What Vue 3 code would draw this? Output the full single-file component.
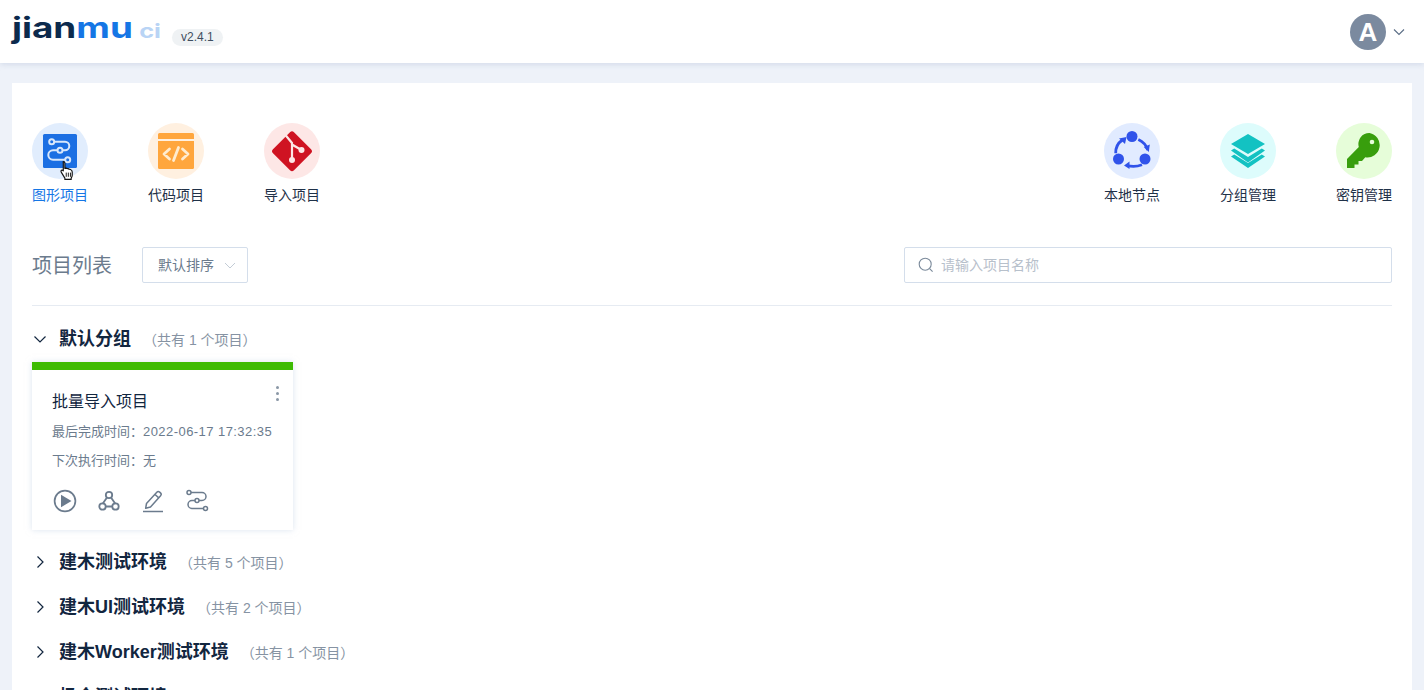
<template>
  <div class="page">
    <header class="top">
      <div class="brand">
        <span class="logo"><span class="logo__dark">jian</span><span class="logo__blue">mu</span><span class="logo__ci">ci</span></span>
        <span class="version">v2.4.1</span>
      </div>
      <div class="user">
        <span class="avatar">A</span>
        <svg class="user__arrow" width="12" height="8" viewBox="0 0 12 8"><path d="M1 1.5l5 5 5-5" fill="none" stroke="#5a6d85" stroke-width="1.1" /></svg>
      </div>
    </header>

    <main class="panel">
      <section class="menu">
        <div class="menu__side">
          <div class="entry entry--active">
            <span class="entry__icon" style="background:#e1edfd">
              <svg width="36" height="36" viewBox="0 0 36 36">
                <rect x="1" y="1" width="34" height="34" rx="1.5" fill="#1b6fe3" />
                <g fill="none" stroke="#d8e7fb" stroke-width="2">
                  <path d="M10 8.700h13a4.300 4.300 0 0 1 0 8.600H11a4.700 4.700 0 0 0 0 9.400h14" />
                  <circle cx="9.700" cy="8.700" r="2.500" fill="#1b6fe3" />
                  <circle cx="18" cy="17.300" r="2.500" fill="#1b6fe3" />
                  <circle cx="25.700" cy="26.700" r="2.500" fill="#1b6fe3" />
                </g>
              </svg>
              <svg class="entry__cursor" width="17" height="21" viewBox="0 0 16 20">
                <path d="M4 1.500c1 0 1.500.7 1.500 1.500v5l1-.3 1 .3 1 .2 1 .5 1.300.3c1.200.4 1.700 1.200 1.700 2.500v3c0 1-.4 1.800-1 2.700v1.300H5.500v-1.200L2.300 12c-.7-1-.6-1.800 0-2.200.6-.4 1.200-.1 1.700.5V3c0-.8-.3-1.500 0-1.500z" fill="#fff" stroke="#111" stroke-width="1.100" stroke-linejoin="round" />
                <path d="M6.800 12v4M8.800 12v4M10.800 12v4" stroke="#111" stroke-width=".9" />
              </svg>
            </span>
            <span class="entry__label">图形项目</span>
          </div>
          <div class="entry">
            <span class="entry__icon" style="background:#fff0e0">
              <svg width="36" height="36" viewBox="0 0 36 36">
                <path d="M0 1.500A1.500 1.500 0 0 1 1.500 0h33A1.500 1.500 0 0 1 36 1.500V6H0z" fill="#ffa63d" />
                <path d="M0 8h36v26.500a1.500 1.500 0 0 1-1.500 1.500h-33A1.500 1.500 0 0 1 0 34.500z" fill="#ffa63d" />
                <path d="M11.500 16L6 21l5.500 5M24.500 16L30 21l-5.500 5M20.500 14.500l-5 13" fill="none" stroke="#ffeccf" stroke-width="2.800" stroke-linecap="round" stroke-linejoin="round" />
              </svg>
            </span>
            <span class="entry__label">代码项目</span>
          </div>
          <div class="entry">
            <span class="entry__icon" style="background:#fde7e6">
              <svg width="42" height="42" viewBox="0 0 42 42">
                <path d="M19 2.200a2.800 2.800 0 0 1 4 0l17 17a2.800 2.800 0 0 1 0 4l-17 17a2.800 2.800 0 0 1-4 0l-17-17a2.800 2.800 0 0 1 0-4z" fill="#cf1322" />
                <path d="M14 4.500L21 13v17M21 13v1.500l9.500 5.500" fill="none" stroke="#fde7e6" stroke-width="2.200" />
                <circle cx="21" cy="30" r="3" fill="#fde7e6" />
                <circle cx="30.500" cy="20" r="3" fill="#fde7e6" />
              </svg>
            </span>
            <span class="entry__label">导入项目</span>
          </div>
        </div>
        <div class="menu__side">
          <div class="entry">
            <span class="entry__icon" style="background:#e1ebff">
              <svg width="42" height="42" viewBox="0 0 42 42">
                <g fill="#3053ea">
                  <circle cx="21" cy="6.500" r="5.500" />
                  <circle cx="7.500" cy="29" r="5.500" />
                  <circle cx="34" cy="29" r="5.500" />
                </g>
                <g fill="none" stroke="#3053ea" stroke-width="2.800">
                  <path d="M4.700 23.300C4.500 18 7 13 11.300 10" />
                  <path d="M27.300 9.500c4.500 2 8 6 9.500 10.500" />
                  <path d="M16 35.500c5 1.300 10.500 1 15-.8" />
                </g>
                <g fill="#3053ea">
                  <path d="M8 8.500l7.500-1.500-1.500 7z" />
                  <path d="M37.800 22l-5-5 6-2.500z" />
                  <path d="M13 35.500l5.500-4v7.500z" />
                </g>
              </svg>
            </span>
            <span class="entry__label">本地节点</span>
          </div>
          <div class="entry">
            <span class="entry__icon" style="background:#ddfcfc">
              <svg width="36" height="36" viewBox="0 0 36 36">
                <g fill="#13c2c2">
                  <path d="M18 1L35 11 18 21 1 11z" />
                  <path d="M4.200 15.500L18 24l13.800-8.500 3.200 2L18 29.500 1 17.500z" />
                  <path d="M4.200 21.500L18 30l13.800-8.500 3.200 2L18 35 1 23.500z" />
                </g>
              </svg>
            </span>
            <span class="entry__label">分组管理</span>
          </div>
          <div class="entry">
            <span class="entry__icon" style="background:#e6fdd9">
              <svg width="36" height="36" viewBox="0 0 36 36">
                <path d="M23.500 0A11 11 0 0 0 12.800 14L1 26v9h7.500v-3.500h4V28h3.500l3.300-3.800A11 11 0 1 0 23.500 0z" fill="#389e0d" />
                <circle cx="26" cy="9" r="2.300" fill="#e6fdd9" />
              </svg>
            </span>
            <span class="entry__label">密钥管理</span>
          </div>
        </div>
      </section>

      <section class="toolbar">
        <div class="toolbar__left">
          <h2 class="toolbar__title">项目列表</h2>
          <div class="select">
            <span class="field-text">默认排序</span>
            <svg width="12" height="7" viewBox="0 0 12 7"><path d="M1 1l5 5 5-5" fill="none" stroke="#c3ccd6" stroke-width="1" /></svg>
          </div>
        </div>
        <div class="search">
          <svg width="16" height="16" viewBox="0 0 16 16"><circle cx="7.200" cy="7.200" r="6" fill="none" stroke="#7b8a9b" stroke-width="1.100" /><path d="M11.600 11.600l3 3" stroke="#7b8a9b" stroke-width="1.100" /></svg>
          <span class="field-text">请输入项目名称</span>
        </div>
      </section>

      <section v-for="group in groups" :key="group.name" class="group">
        <div class="group__head">
          <svg class="group__arrow" width="16" height="16" viewBox="0 0 16 16">
            <path :d="group.open ? 'M2.500 5.500L8 11l5.500-5.500' : 'M5.500 2.500L11 8l-5.500 5.500'" fill="none" stroke="#12263f" stroke-width="1.200" />
          </svg>
          <span class="group__name">{{ group.name }}</span>
          <span class="group__count">（共有 {{ group.count }} 个项目）</span>
        </div>
        <div v-if="group.open" class="card">
          <div class="card__bar"></div>
          <div class="card__body">
            <span class="card__more"><i></i><i></i><i></i></span>
            <div class="card__title">批量导入项目</div>
            <div class="card__line">最后完成时间：<span class="card__time">2022-06-17 17:32:35</span></div>
            <div class="card__line">下次执行时间：无</div>
            <div class="card__actions">
              <svg width="24" height="24" viewBox="0 0 24 24"><circle cx="12" cy="12" r="10.400" fill="none" stroke="#6b7b8d" stroke-width="1.700" /><path d="M8 5.800v12.400L18.500 12z" fill="#6b7b8d" /></svg>
              <svg width="24" height="24" viewBox="0 0 24 24">
                <g fill="none" stroke="#6b7b8d" stroke-width="1.800">
                  <circle cx="12" cy="6" r="3.200" />
                  <circle cx="5.500" cy="17.500" r="3.200" />
                  <circle cx="18.500" cy="17.500" r="3.200" />
                  <path d="M9.800 8.700L5.500 15M14.200 8.700l4.300 6.300M8.800 17.500h6.500" />
                </g>
              </svg>
              <svg width="24" height="24" viewBox="0 0 24 24">
                <g fill="none" stroke="#6b7b8d" stroke-width="1.500" stroke-linejoin="round">
                  <path d="M5.500 14.500L15.800 3.200a2 2 0 0 1 2.800-.1l.9.800a2 2 0 0 1 .1 2.800L9.500 18l-4.800 1.200z" />
                  <path d="M14 5.500l3.800 3.400" />
                </g>
                <path d="M2 22.500h20" stroke="#6b7b8d" stroke-width="1.500" />
              </svg>
              <svg width="24" height="24" viewBox="0 0 24 24">
                <g fill="none" stroke="#6b7b8d" stroke-width="1.500">
                  <path d="M6 3.500h11a4 4 0 0 1 0 8H7a4 4 0 0 0 0 8h12" />
                  <circle cx="4" cy="3.500" r="2" fill="#fff" />
                  <circle cx="12" cy="11.500" r="2" fill="#fff" />
                  <circle cx="20.500" cy="19.500" r="2" fill="#fff" />
                </g>
              </svg>
            </div>
          </div>
        </div>
      </section>
    </main>
  </div>
</template>

<script setup>
const groups = [
  { name: '默认分组', count: 1, open: true },
  { name: '建木测试环境', count: 5, open: false },
  { name: '建木UI测试环境', count: 2, open: false },
  { name: '建木Worker测试环境', count: 1, open: false },
  { name: '极全测试环境', count: 3, open: false }
]
</script>

<style>
html, body {
  margin: 0;
  height: 100%;
  overflow: hidden;
  background: #eef2f9;
}
</style>

<style scoped>
.page {
  height: 690px;
  overflow: hidden;
  background: #eef2f9;
  font-family: "Liberation Sans", "Noto Sans CJK SC", sans-serif;
  color: #12263f;
}

.top {
  height: 63px;
  box-sizing: border-box;
  padding: 0 19px 0 12px;
  display: flex;
  align-items: center;
  justify-content: space-between;
  background: #fff;
  box-shadow: 0 1px 6px rgba(160, 175, 205, 0.4);
}

.brand {
  display: flex;
  align-items: center;
}

.logo {
  width: 160px;
  font-family: Inter, sans-serif;
  font-weight: 700;
  font-size: 29px;
  line-height: 40px;
  display: flex;
  align-items: baseline;
  transform: translateY(-2px) scaleX(1.27);
  transform-origin: left center;
}

.logo__dark {
  color: #0c2a4d;
}

.logo__blue {
  color: #1576e5;
}

.logo__ci {
  margin-left: 5px;
  color: #b9d4f5;
  font-size: 20px;
}

.version {
  margin-left: 0;
  padding: 0 9px;
  height: 17px;
  line-height: 17px;
  border-radius: 9px;
  background: #eff2f4;
  font-size: 12px;
  color: #3f4e60;
  transform: translateY(6px);
}

.user {
  display: flex;
  align-items: center;
  gap: 7px;
}

.avatar {
  width: 36px;
  height: 36px;
  border-radius: 50%;
  background: #7b8a9f;
  color: #fff;
  font-size: 26px;
  font-weight: 700;
  line-height: 36px;
  text-align: center;
}

.panel {
  margin: 20px 12px 0;
  padding: 40px 20px 0;
  background: #fff;
}

.menu {
  display: flex;
  justify-content: space-between;
}

.menu__side {
  display: flex;
  gap: 60px;
}

.entry {
  width: 56px;
  display: flex;
  flex-direction: column;
  align-items: center;
  gap: 8px;
}

.entry__icon {
  position: relative;
  width: 56px;
  height: 56px;
  border-radius: 50%;
  display: flex;
  align-items: center;
  justify-content: center;
}

.entry__cursor {
  position: absolute;
  left: 27px;
  top: 37px;
}

.entry__label {
  font-size: 14px;
  line-height: 16px;
  white-space: nowrap;
  color: #1f3148;
}

.entry--active .entry__label {
  color: #1576e5;
}

.toolbar {
  margin-top: 44px;
  margin-bottom: 10px;
  padding-bottom: 22px;
  display: flex;
  align-items: center;
  justify-content: space-between;
  border-bottom: 1px solid #e6ebf2;
}

.toolbar__left {
  display: flex;
  align-items: center;
  gap: 30px;
}

.toolbar__title {
  margin: 2px 0 0;
  font-size: 20px;
  font-weight: 400;
  line-height: 28px;
  color: #6b7b8d;
}

.field-text {
  margin-bottom: 2px;
}

.select {
  width: 106px;
  height: 36px;
  box-sizing: border-box;
  padding: 0 11px 0 15px;
  border: 1px solid #d4deeb;
  border-radius: 2px;
  display: flex;
  align-items: center;
  justify-content: space-between;
  font-size: 14px;
  color: #6b7b8d;
}

.search {
  width: 488px;
  height: 36px;
  box-sizing: border-box;
  padding: 0 13px;
  border: 1px solid #d4deeb;
  border-radius: 2px;
  display: flex;
  align-items: center;
  gap: 7px;
  font-size: 14px;
  color: #b7c0cb;
}

.group__head {
  height: 45px;
  display: flex;
  align-items: center;
}

.group__arrow {
  flex-shrink: 0;
}

.group__name {
  margin-left: 11px;
  font-size: 18px;
  font-weight: 700;
  line-height: 24px;
  color: #12263f;
}

.group__count {
  margin-left: 12px;
  font-size: 14px;
  color: #8693a3;
}

.card {
  width: 261px;
  height: 168px;
  margin-top: 1px;
  margin-bottom: 9px;
  background: #fff;
  box-shadow: 0 0 6px rgba(190, 205, 225, 0.55);
}

.card__bar {
  height: 8px;
  background: #3ebb03;
}

.card__body {
  position: relative;
  padding: 20px 20px 0;
}

.card__more {
  position: absolute;
  right: 14px;
  top: 16px;
  display: flex;
  flex-direction: column;
  gap: 3px;
}

.card__more i {
  width: 3px;
  height: 3px;
  border-radius: 50%;
  background: #8a97a6;
}

.card__title {
  font-size: 16px;
  line-height: 24px;
  color: #12263f;
}

.card__line {
  margin-top: 7px;
  font-size: 13px;
  line-height: 22px;
  white-space: nowrap;
  color: #6b7b8d;
}

.card__time {
  letter-spacing: 0.44px;
}

.card__actions {
  margin-top: 17px;
  padding-left: 1px;
  display: flex;
  gap: 20px;
}
</style>
